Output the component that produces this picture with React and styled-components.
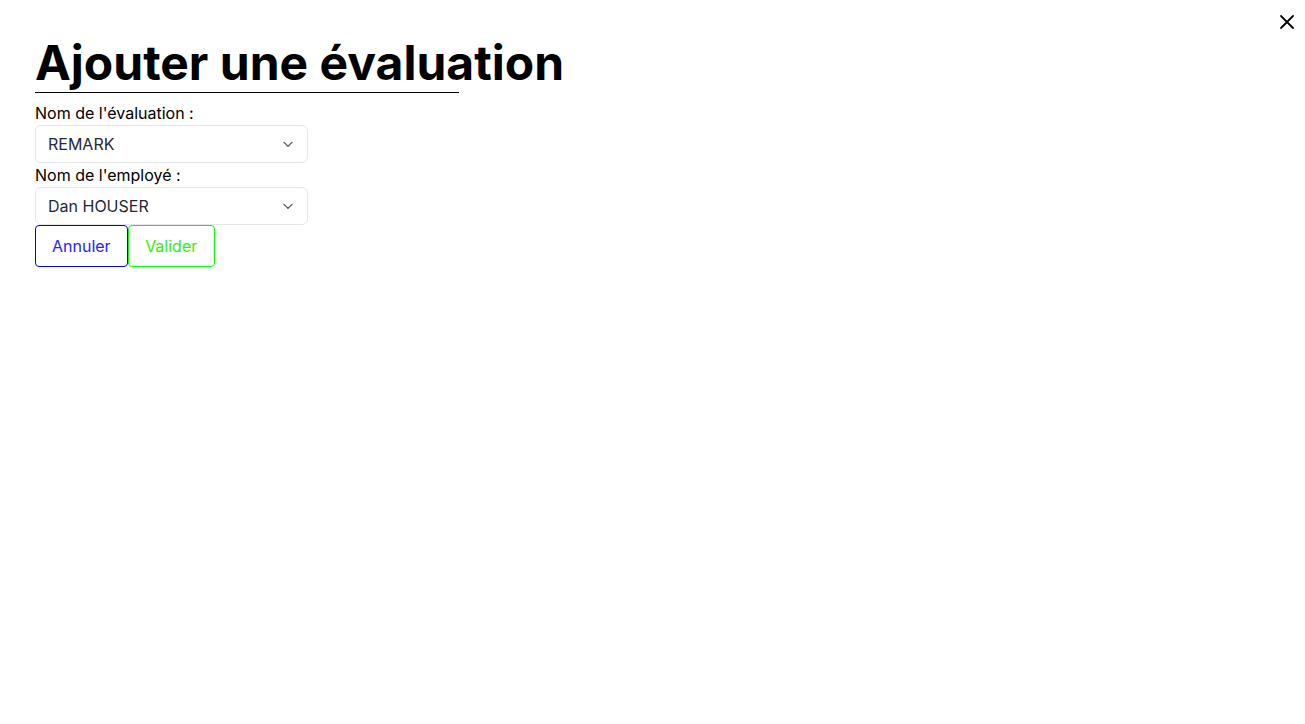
import React from 'react'
import styled, { createGlobalStyle } from 'styled-components'

const GlobalStyle = createGlobalStyle`
  * { box-sizing: border-box; }
  body {
    margin: 0;
    background: #fff;
    font-family: Inter, "Noto Sans", sans-serif;
    color: #000;
  }
`

const Page = styled.div`
  position: relative;
  min-height: 724px;
  padding: 34px 35px 0;
`

const CloseButton = styled.button`
  position: absolute;
  top: 13px;
  right: 9px;
  width: 18px;
  height: 18px;
  padding: 0;
  border: none;
  background: none;
  cursor: pointer;
  display: flex;
  align-items: center;
  justify-content: center;
`

const TitleBar = styled.div`
  width: 424px;
  border-bottom: 1px solid #000;
  margin-bottom: 8px;
`

const Title = styled.h1`
  margin: 0;
  font-size: 48px;
  line-height: 58px;
  font-weight: 700;
  white-space: nowrap;
`

const Form = styled.form`
  display: flex;
  flex-direction: column;
  align-items: flex-start;
`

const Label = styled.label`
  font-size: 16px;
  line-height: 24px;
`

const SelectWrap = styled.div`
  position: relative;
  width: 273px;
  height: 38px;
`

const Select = styled.select`
  appearance: none;
  width: 100%;
  height: 100%;
  padding: 0 36px 0 12px;
  border: 1px solid #e5e7eb;
  border-radius: 6px;
  background: #fff;
  font-family: inherit;
  font-size: 16px;
  color: #1f2937;
  outline: none;
`

const Chevron = styled.svg`
  position: absolute;
  right: 12px;
  top: 50%;
  transform: translateY(-50%);
  pointer-events: none;
`

const Actions = styled.div`
  display: flex;
`

const Button = styled.button`
  height: 42px;
  padding: 0 ${p => p.$pad}px;
  background: #fff;
  border: 1px solid ${p => p.$color};
  border-radius: 4px;
  color: ${p => p.$text};
  font-family: inherit;
  font-size: 16px;
  cursor: pointer;
`

const SelectField = ({ value, options }) => (
  <SelectWrap>
    <Select defaultValue={value}>
      {options.map(o => <option key={o}>{o}</option>)}
    </Select>
    <Chevron width="16" height="16" viewBox="0 0 20 20" fill="none" stroke="#4b5563" strokeWidth="1.6" strokeLinecap="round" strokeLinejoin="round">
      <path d="M5 8l5 5 5-5" />
    </Chevron>
  </SelectWrap>
)

export default function App() {
  return (
    <>
      <GlobalStyle />
      <Page>
        <CloseButton aria-label="Fermer">
          <svg width="18" height="18" viewBox="0 0 24 24" fill="none" stroke="#000" strokeWidth="2.4" strokeLinecap="round">
            <path d="M4 4l16 16M20 4L4 20" />
          </svg>
        </CloseButton>
        <TitleBar>
          <Title>Ajouter une évaluation</Title>
        </TitleBar>
        <Form onSubmit={e => e.preventDefault()}>
          <Label>Nom de l'évaluation :</Label>
          <SelectField value="REMARK" options={['REMARK', 'ANNUAL', 'PROBATION']} />
          <Label>Nom de l'employé :</Label>
          <SelectField value="Dan HOUSER" options={['Dan HOUSER', 'Sam HOUSER']} />
          <Actions>
            <Button type="button" $pad={16} $color="#0000ff" $text="#2323ff">Annuler</Button>
            <Button type="submit" $pad={16.5} $color="#00ff00" $text="#33ee00">Valider</Button>
          </Actions>
        </Form>
      </Page>
    </>
  )
}
